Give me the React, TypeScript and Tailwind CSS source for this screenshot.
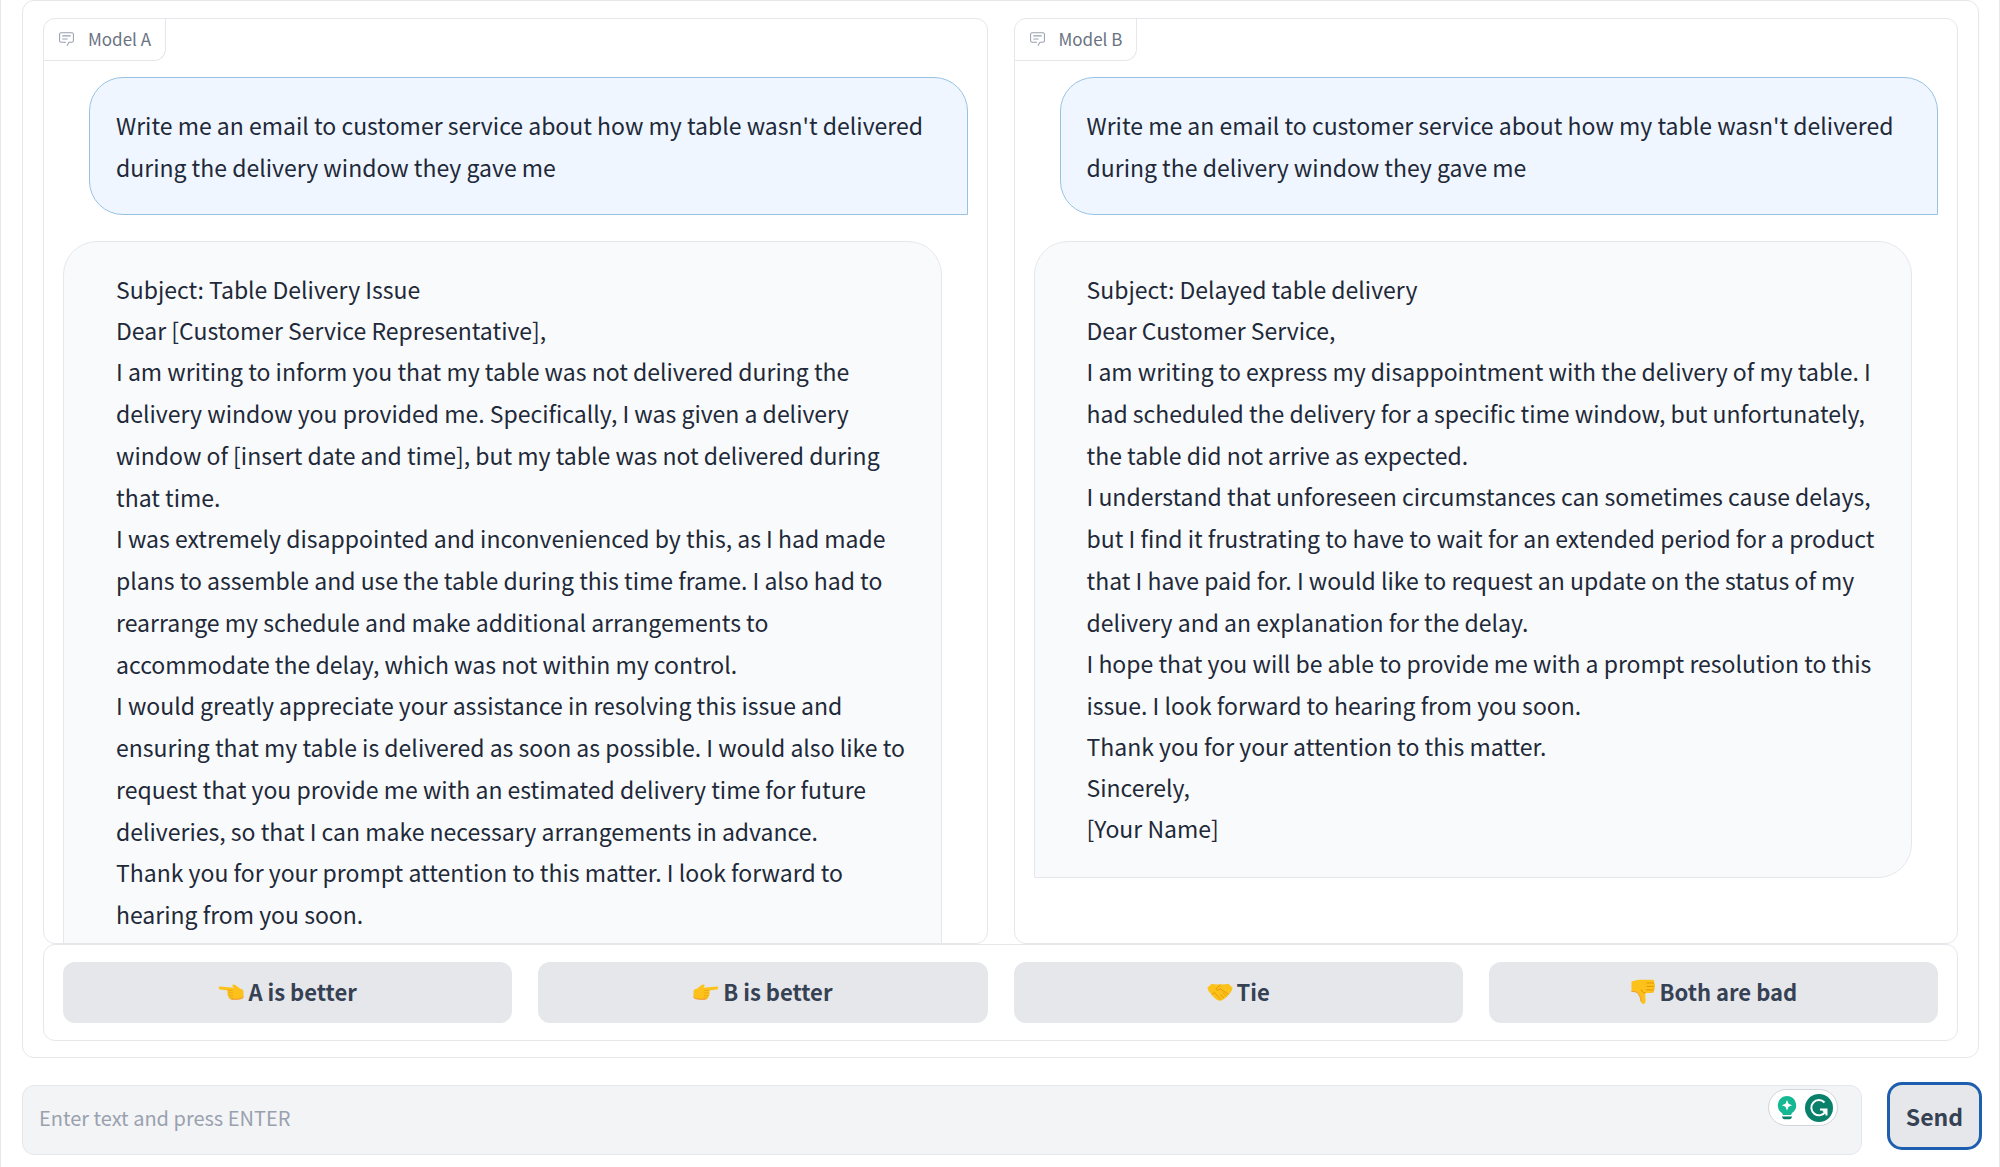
import { clsx } from "clsx";

const PROMPT =
    "Write me an email to customer service about how my table wasn't delivered during the delivery window they gave me";

const REPLY_A = [
    "Subject: Table Delivery Issue",
    "Dear [Customer Service Representative],",
    "I am writing to inform you that my table was not delivered during the delivery window you provided me. Specifically, I was given a delivery window of [insert date and time], but my table was not delivered during that time.",
    "I was extremely disappointed and inconvenienced by this, as I had made plans to assemble and use the table during this time frame. I also had to rearrange my schedule and make additional arrangements to accommodate the delay, which was not within my control.",
    "I would greatly appreciate your assistance in resolving this issue and ensuring that my table is delivered as soon as possible. I would also like to request that you provide me with an estimated delivery time for future deliveries, so that I can make necessary arrangements in advance.",
    "Thank you for your prompt attention to this matter. I look forward to hearing from you soon.",
];

const REPLY_B = [
    "Subject: Delayed table delivery",
    "Dear Customer Service,",
    "I am writing to express my disappointment with the delivery of my table. I had scheduled the delivery for a specific time window, but unfortunately, the table did not arrive as expected.",
    "I understand that unforeseen circumstances can sometimes cause delays, but I find it frustrating to have to wait for an extended period for a product that I have paid for. I would like to request an update on the status of my delivery and an explanation for the delay.",
    "I hope that you will be able to provide me with a prompt resolution to this issue. I look forward to hearing from you soon.",
    "Thank you for your attention to this matter.",
    "Sincerely,",
    "[Your Name]",
];

function ChatIcon() {
    return (
        <svg viewBox="0 0 32 32" className="size-[17px]" fill="currentColor" aria-hidden="true">
            <path d="M17.74 30 16 29l4-7h6a2 2 0 0 0 2-2V8a2 2 0 0 0-2-2H6a2 2 0 0 0-2 2v12a2 2 0 0 0 2 2h9v2H6a4 4 0 0 1-4-4V8a4 4 0 0 1 4-4h20a4 4 0 0 1 4 4v12a4 4 0 0 1-4 4h-4.84Z" />
            <path d="M8 10h16v2H8zM8 16h10v2H8z" />
        </svg>
    );
}

function PointIcon({ flip = false }: { flip?: boolean }) {
    return (
        <svg viewBox="0 0 26 26" className={clsx("size-[26px]", flip && "-scale-x-100")} aria-hidden="true">
            <path d="M2 7.5c-1.6 0-1.7 2.6 0 2.900l8 1c-.8.7-.9 1.700-.1 2.400-.8.9-.6 2.100.4 2.700-.4 1.100.1 2.100 1.200 2.400.1 1.200 1.100 1.700 2.500 1.700h6c1 0 2-.5 3.200-.5 1.500 0 2.300-1.100 2.300-2.500v-5c0-1.400-.8-2.400-2.500-2.600-2.100-.3-4.500-3.700-6.700-4.400-1.500-.5-2.500.6-1.600 1.800l1 1.400Z" fill="#fcc21b" />
            <path d="M10 11.400h4.500M10.200 13.900h4.400M10.700 16.600h4M12 19h3" stroke="#efaa10" strokeWidth="1" strokeLinecap="round" fill="none" />
            <path d="M13.500 20.200h6c1 0 2-.5 3.200-.5 1.300 0 2.200-.9 2.300-2.200" stroke="#f19534" strokeWidth="1" fill="none" />
        </svg>
    );
}

function HandshakeIcon() {
    return (
        <svg viewBox="0 0 26 26" className="size-[26px]" aria-hidden="true">
            <path d="M.4 8.800 4.600 4.800c2.500.5 5 .8 8.400.5 3 .3 5.600 0 8.400-.5l4.200 4c-.6 2.900-2 5.200-4 6.900-2 2.300-4.600 4.800-7.300 5.900-1.400.5-3.200.2-4.500-.8-2.200-1.500-4-3.500-5.400-5.500C2.200 13.500.9 11.300.4 8.800Z" fill="#fcc21b" />
            <path d="m13 6.200-4.300 4c.8 1.300 2.600 1.200 4.600-.4l8 5.500M16.200 14l3 3M13.400 15.800l3.200 2.800M10.800 17.500l2.700 2.600M5 15.500l2.300-2 1.700 2 1.600 1.300" stroke="#e59a08" strokeWidth="1" strokeLinecap="round" strokeLinejoin="round" fill="none" />
        </svg>
    );
}

function ThumbDownIcon() {
    return (
        <svg viewBox="0 0 26 26" className="size-[26px]" aria-hidden="true">
            <path d="M1.500 2.500C5 1.200 9 .8 13 .8h9c2.300 0 2.900 2 1.900 3 1.500.8 1.500 2.800.3 3.600 1.200 1 .9 3-.4 3.500.8 1.500-.2 3-1.800 3h-6.500c-.7 2.500.1 4.900.1 8 0 3.800-4.300 4-4.600.7-.3-4.200-1.500-7-4.500-9.300-1.500-.8-3.500-.8-5-.8Z" fill="#fcc21b" />
            <path d="M17 4h6.500M17 7.400h7M16.500 10.900h7M15 14c-2-.2-3.400-1.300-3.600-3" stroke="#e59600" strokeWidth="1" strokeLinecap="round" fill="none" />
            <path d="M1.500 12.500c1.500 0 3.500 0 5 .8 3 2.300 4.200 5.100 4.500 9.300" stroke="#f19534" strokeWidth="1" fill="none" />
        </svg>
    );
}

function BulbIcon() {
    return (
        <svg viewBox="0 0 20 24" className="h-6 w-5" aria-hidden="true">
            <path d="M10 0a9.300 9.300 0 0 0-5 17l1 2h8l1-2A9.300 9.300 0 0 0 10 0Z" fill="#15b892" />
            <path d="m10 4 1.500 3.700L15.200 9.200l-3.700 1.500L10 14.400l-1.500-3.700-3.700-1.500 3.700-1.500Z" fill="#fff" />
            <path d="M5 20.500h10c-.2 1.800-1.200 2.700-2.500 2.700h-5c-1.300 0-2.300-.9-2.500-2.700Z" fill="#08806a" />
        </svg>
    );
}

function GrammarIcon() {
    return (
        <svg viewBox="0 0 28 28" className="size-7" aria-hidden="true">
            <circle cx="14" cy="14" r="14" fill="#08806a" />
            <path d="M19.500 8.500A7.600 7.600 0 1 0 20.500 17.500M15 15.500h6.500V21.500" stroke="#fff" strokeWidth="2" fill="none" />
            <path d="M21.500 15.500v5.500l-4.500-4.500Z" fill="#fff" />
        </svg>
    );
}

interface PanelProps {
    name: string;
    reply: string[];
    // reply runs past the bottom of the panel
    clipped?: boolean;
}

function ModelPanel({ name, reply, clipped }: PanelProps) {
    return (
        <section className="h-[926px] overflow-hidden rounded-xl border border-gray-200">
            <h2 className="flex h-[42px] w-fit items-center gap-[13px] rounded-br-xl border-r border-b border-gray-200 px-3.5 pb-0.5 text-[17px] text-gray-500">
                <span className="text-gray-400">
                    <ChatIcon />
                </span>
                {name}
            </h2>
            <div className="flex flex-col gap-[26px] px-[19px] pt-4 text-[23px]/[42px] text-gray-800">
                <div className="ml-[26px] rounded-[34px] rounded-br-none border border-[#98c2e2] bg-[#eff6ff] p-[26px]">
                    {PROMPT}
                </div>
                <div
                    className={clsx(
                        "mr-[26px] -space-y-px rounded-[34px] rounded-bl-none border border-gray-200 bg-gray-50 pt-[26px] pr-[26px] pl-[52px]",
                        clipped ? "pb-20" : "pb-7"
                    )}
                >
                    {reply.map((line) => (
                        <p key={line}>{line}</p>
                    ))}
                </div>
            </div>
        </section>
    );
}

const VOTES = [
    { label: "A is better", icon: <PointIcon /> },
    { label: "B is better", icon: <PointIcon flip /> },
    { label: "Tie", icon: <HandshakeIcon /> },
    { label: "Both are bad", icon: <ThumbDownIcon /> },
];

export default function App() {
    return (
        <main className="min-h-screen border-x border-gray-200 bg-white pr-5 pl-[21px] font-['Noto_Sans_CJK_SC','Open_Sans',sans-serif]">
            <div className="rounded-xl border border-gray-200 px-5 pt-[17px] pb-4">
                <div className="grid grid-cols-2 gap-[26px]">
                    <ModelPanel name="Model A" reply={REPLY_A} clipped />
                    <ModelPanel name="Model B" reply={REPLY_B} />
                </div>
                <div className="grid grid-cols-4 gap-[26px] rounded-xl border border-gray-200 px-[19px] py-[17px]">
                    {VOTES.map((vote) => (
                        <button
                            key={vote.label}
                            type="button"
                            className="flex h-[61px] items-center justify-center gap-1 rounded-xl bg-gray-200 pb-0.5 text-[22px] font-bold text-gray-700"
                        >
                            {vote.icon}
                            {vote.label}
                        </button>
                    ))}
                </div>
            </div>

            <form className="mt-[27px] flex items-start gap-7" onSubmit={(e) => e.preventDefault()}>
                <div className="relative flex-1">
                    <input
                        type="text"
                        aria-label="Message"
                        placeholder="Enter text and press ENTER"
                        className="h-[70px] w-full rounded-xl border border-gray-200 bg-gray-100 px-4 pb-1.5 text-xl text-gray-800 outline-none placeholder:text-gray-400"
                    />
                    <div className="absolute top-1 right-6 flex h-[37px] items-center gap-2 rounded-full border border-gray-300 bg-white pr-1 pl-2">
                        <BulbIcon />
                        <GrammarIcon />
                    </div>
                </div>
                <button
                    type="submit"
                    className="h-[62px] w-[89px] rounded-xl bg-gray-200 text-[23px] font-bold text-gray-700 ring-3 ring-[#1d5fae]"
                >
                    Send
                </button>
            </form>
        </main>
    );
}
